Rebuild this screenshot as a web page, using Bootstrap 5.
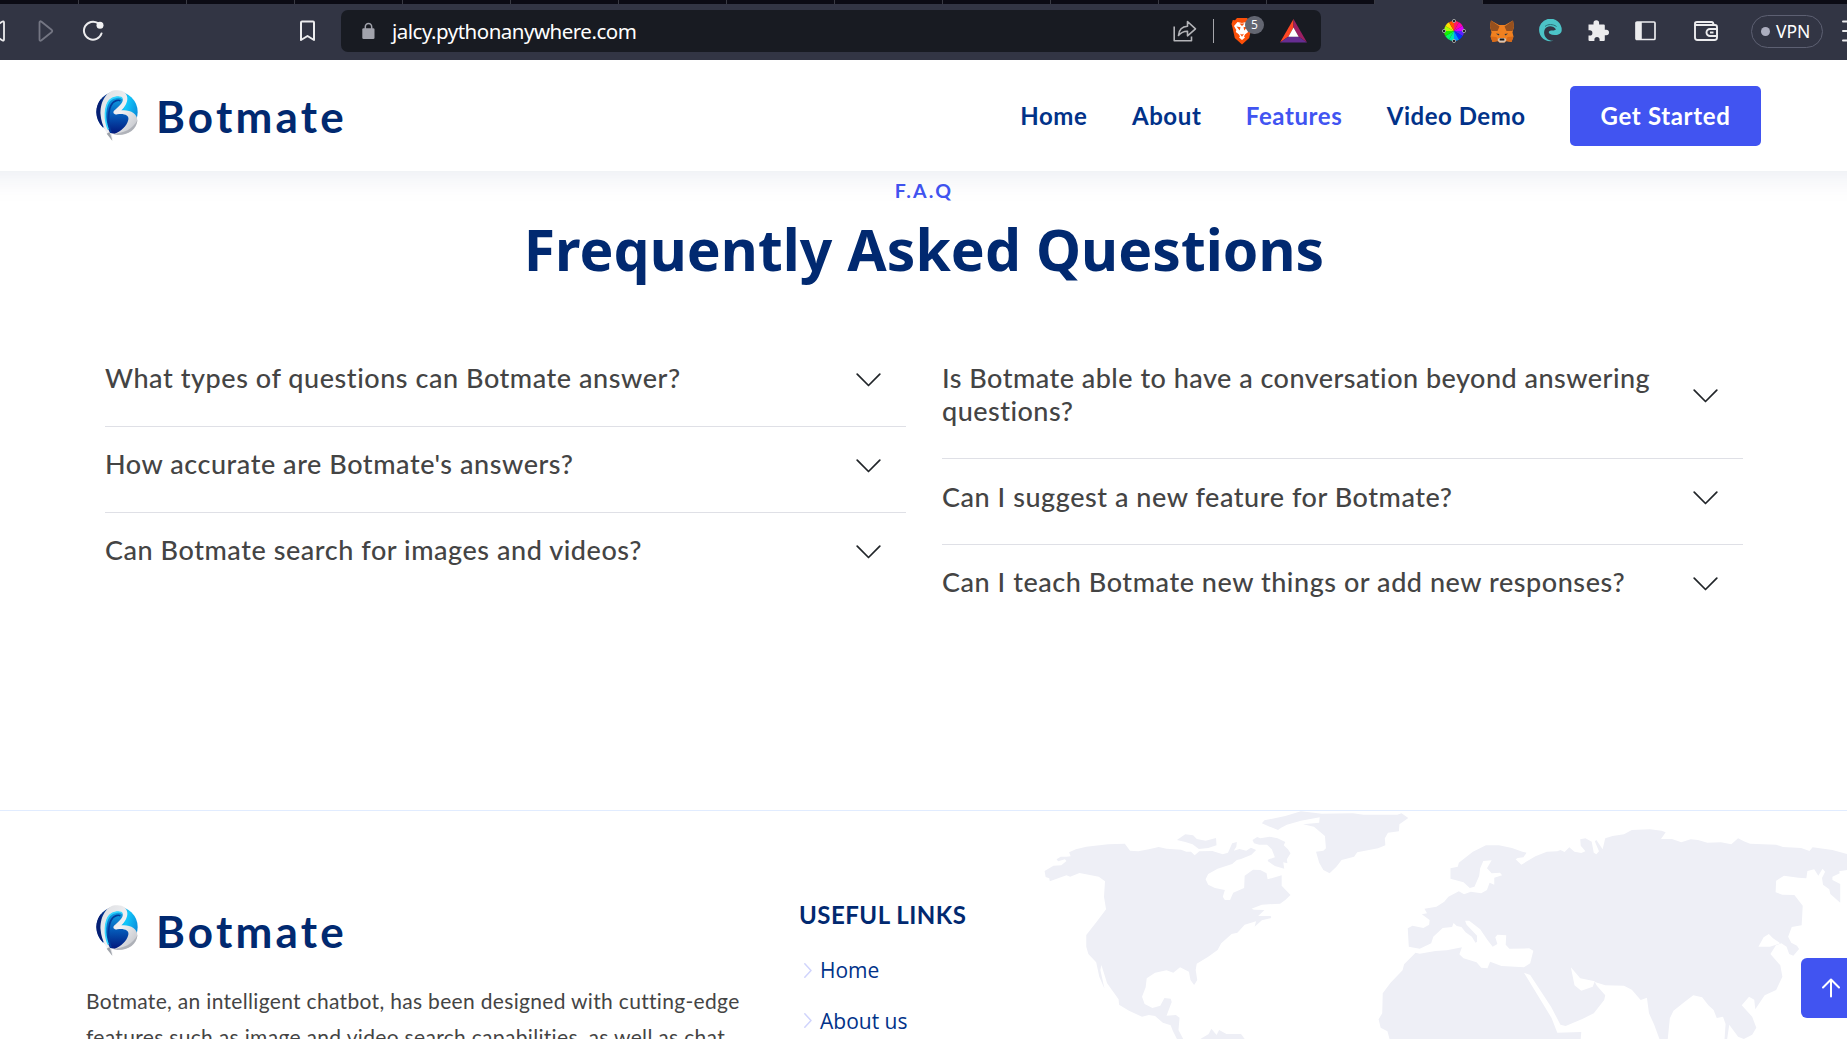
<!DOCTYPE html>
<html lang="en">
<head>
<meta charset="utf-8">
<meta name="viewport" content="width=device-width, initial-scale=1">
<title>Botmate</title>
<link rel="stylesheet" href="https://cdn.jsdelivr.net/npm/bootstrap@5.3.0/dist/css/bootstrap.min.css">
<script src="https://cdn.jsdelivr.net/npm/bootstrap@5.3.0/dist/js/bootstrap.bundle.min.js"></script>
<style>
  :root { --navy:#012970; --ink:#013289; --brand:#4154f1; }
  body { font-family:"Open Sans","Noto Sans",sans-serif; color:#444; background:#fff; }
  .screen { width:1847px; height:1039px; }
  svg { display:block; flex:none; }
  .round-face { font-family:Lato,"Open Sans",sans-serif; }
  /* browser chrome */
  .tabstrip { height:4px; background:#0b0b14; }
  .tabstrip span { width:108px; border-right:1px solid #3a3b44; flex:none; }
  .tabstrip span:first-child { width:79px; }
  .tabstrip .current-tab { background:#323544; }
  .toolbar { height:56px; background:#323544; padding-bottom:2px; }
  .toolbar > *, .address > * { flex:none; }
  .address { width:980px; height:42px; margin-left:25px; background:#181b22; border-radius:7px; }
  .address .url { font-family:"Noto Sans",sans-serif; font-size:20.5px; letter-spacing:-.5px; margin-left:17px; width:782px; line-height:30px; color:#fff; }
  .split { width:1px; height:24px; margin-left:16px; background:#a5a6ab; }
  .count { left:14px; top:-1px; width:19px; height:18px; border-radius:9px; background:#636671; color:#fff; font-size:12px; line-height:18px; }
  .vpn { width:72px; height:33px; margin-left:33px; border:1.5px solid #5d6072; border-radius:17px; color:#fff; font-family:"Noto Sans",sans-serif; font-size:17.5px; }
  .vpn i { width:9px; height:9px; border-radius:50%; background:#acaebf; }
  /* site header: bleeds past both edges so that its shadow stays even */
  .site-head { height:111px; background:#fff; box-shadow:0 2px 30px rgba(1,41,112,.1); margin:0 -40px; padding:0 126px 0 135px; z-index:2; }
  .brand-name { font-size:44px; font-weight:700; line-height:52px; letter-spacing:3.2px; color:var(--navy); margin-left:17px; }
  .site-nav { gap:44.4px; }
  .site-nav a { font-size:24px; font-weight:700; line-height:30px; color:var(--ink); text-decoration:none; }
  .site-nav a.active { color:var(--brand); }
  .site-nav a.start { background:var(--brand); color:#fff; width:191px; height:60px; line-height:59px; border-radius:5px; letter-spacing:.65px; }
  /* faq */
  .faq { height:639px; padding:8px 104px 0 105px; }
  .faq .kicker { font-size:19.5px; font-weight:700; line-height:24px; letter-spacing:2.2px; color:var(--brand); }
  .faq h2 { font-family:"Noto Sans",sans-serif; font-size:57px; font-weight:700; line-height:64px; letter-spacing:.06px; color:var(--navy); margin:14px 0 61px; }
  .faq-cols { gap:36px; }
  .faq-item { padding:21.3px 25.500px 31.1px 0; border-bottom:1px solid #dfe0e6; font-size:27px; font-weight:500; line-height:32.4px; letter-spacing:.55px; }
  .faq-item:first-child { padding-top:20.3px; }
  .faq-item:last-child { border-bottom:0; }
  .faq-item svg { margin-top:3px; }
  /* footer */
  .site-foot { height:229px; border-top:1.5px solid #e1ecff; padding:94px 0 0 86px; }
  .about { width:713px; }
  .about p { width:680px; margin:25px 0 0; font-size:21px; line-height:36px; letter-spacing:.32px; }
  .useful h4 { font-size:24px; font-weight:700; line-height:28px; letter-spacing:.5px; color:var(--navy); margin:-4px 0 26px; }
  .useful a { font-size:21px; line-height:30px; color:var(--ink); text-decoration:none; margin-bottom:20.5px; }
  .world { left:1030px; top:-1px; }
  .to-top { left:1801px; top:147px; width:60px; height:60px; border-radius:6px; background:var(--brand); padding:20px 0 0 20px; }
</style>
</head>
<body>
<svg width="0" height="0" class="position-absolute" aria-hidden="true">
  <defs>
    <linearGradient id="disc" x1="0" y1=".2" x2="1" y2=".5"><stop offset="0" stop-color="#02186e"/><stop offset=".35" stop-color="#0553b0"/><stop offset=".7" stop-color="#12c8fb"/><stop offset="1" stop-color="#0a8fdc"/></linearGradient>
    <linearGradient id="inner" x1="0" y1="0" x2="0" y2="1"><stop offset="0" stop-color="#0fa4e4"/><stop offset=".45" stop-color="#0560be"/><stop offset="1" stop-color="#02187c"/></linearGradient>
    <linearGradient id="silver" x1="0" y1="0" x2="1" y2="1"><stop offset="0" stop-color="#dcdee1"/><stop offset=".5" stop-color="#f1f1f3"/><stop offset="1" stop-color="#b4b7be"/></linearGradient>
    <symbol id="logo" viewBox="46 27 132 162">
      <circle cx="112" cy="96" r="62" fill="url(#disc)"/>
      <path d="M64 57C44 82 46 119 70 143L66 100Z" fill="#051f74"/>
      <path d="M98 182C84 168 65 135 63 106 60 70 78 34 106 31 128 28 142 38 143 53 144 69 134 82 125 91 150 88 174 101 173 121 172 148 146 166 112 165 104 165 98 162 95 160 98 168 98 176 98 182Z" fill="url(#silver)"/>
      <path d="M92 159C73 128 73 79 88 62 98 50 124 46 129 57 132 68 114 83 103 92 98 99 104 104 114 103 134 100 149 107 146 119 141 139 124 153 105 161Z" fill="url(#inner)"/>
      <path d="M86 148C73 118 75 78 90 61 100 50 123 48 128 56" fill="none" stroke="#32d5ff" stroke-width="5"/>
      <path d="M94 158C84 132 84 86 98 70 104 62 116 59 122 62" fill="none" stroke="#033b9b" stroke-width="5"/>
      <path d="M174 119C170 148 146 166 113 165L98 161C130 160 159 149 174 119Z" fill="#9a9da5" opacity=".6"/>
      <path d="M90 156 98 182 81 161Z" fill="#9fa3aa"/>
    </symbol>
    <symbol id="down" viewBox="0 0 25 14"><path d="M1.200 1.200 12.500 12.500 23.800 1.200" fill="none" stroke="#212529" stroke-width="1.700" stroke-linecap="round" stroke-linejoin="round"/></symbol>
    <symbol id="next" viewBox="0 0 8 15"><path d="M.8.800 7 7.500.8 14.200" fill="none" stroke="#d0d4fc" stroke-width="1.500" stroke-linecap="round" stroke-linejoin="round"/></symbol>
  </defs>
</svg>
<div class="screen overflow-hidden position-relative">
  <div class="tabstrip d-flex overflow-hidden">
    <span></span><span></span><span></span><span></span><span></span><span></span><span></span><span></span><span></span><span></span><span></span><span></span><span></span><span class="current-tab"></span>
  </div>
  <div class="toolbar d-flex align-items-center overflow-hidden position-relative z-3">
    <svg width="6" height="22" viewBox="0 0 6 22" fill="none" stroke="#ececee" stroke-width="1.800"><path d="M-12 11 2.500 1.500Q4 1 4 2.500v17Q4 21 2.500 20.500Z"/></svg>
    <svg width="16" height="22" viewBox="0 0 16 22" fill="none" stroke="#747683" stroke-width="1.800" stroke-linejoin="round" style="margin-left:32px"><path d="M1.500 2.500C1.500 1 2.500 1 3.500 1.700L13.500 9.800Q15 11 13.500 12.200L3.500 20.300C2.500 21 1.500 21 1.500 19.500Z"/></svg>
    <svg width="23" height="22" viewBox="0 0 23 22" style="margin-left:28px"><path d="M16 3.200A9 9 0 1 0 19.500 13.500" fill="none" stroke="#ececee" stroke-width="2" stroke-linecap="round"/><circle cx="18" cy="5.200" r="3.500" fill="#f2f2f3"/></svg>
    <svg width="17" height="22" viewBox="0 0 17 22" fill="none" stroke="#ececee" stroke-width="2" stroke-linejoin="round" style="margin-left:194px"><path d="M2 2.500Q2 1.500 3 1.500h11q1 0 1 1V20l-6.500-4L2 20Z"/></svg>
    <div class="address d-flex align-items-center">
      <svg width="13" height="18" viewBox="0 0 13 18" style="margin-left:21px"><path d="M3.300 8V5a3.200 3.500 0 0 1 6.400 0v3" fill="none" stroke="#a1a3ac" stroke-width="1.500"/><rect x=".3" y="6.300" width="12.200" height="10.700" rx="1.300" fill="#a1a3ac"/></svg>
      <div class="url">jalcy.pythonanywhere.com</div>
      <svg width="24" height="22" viewBox="0 0 24 22" fill="none" stroke="#b3b4b8" stroke-width="1.600" stroke-linejoin="round" style="margin-left:-1px"><path d="M1.200 6.500V20.800H18.500V16.500"/><path d="M5.500 15.500C6 9.500 9.500 6.500 14.500 6.300V1.500L22.500 8.800 14.500 15.800V11.200C10.500 11 8 12.500 5.500 15.500Z"/></svg>
      <div class="split"></div>
      <div class="position-relative" style="margin-left:17px">
        <svg width="22" height="28" viewBox="0 0 22 28"><path d="M6 1h10l2 2.300 2.200-.2 1.300 4-1 3.400-2.300 10.500L11 27.500 3.800 21 1.500 10.500.5 7.100l1.300-4 2.200.2Z" fill="#fb4f08"/><path d="M6.500 5 11 6l4.500-1 3.500 4-2.300 4 .5 2-3.200 2.600-1 1.900 1 1L11 23l-3-2.500 1-1-1-1.900L4.800 15l.5-2L3 9Z" fill="#fff"/><path d="m5.500 9.500 4 .8-.8 3.200ZM16.500 9.500l-4 .8.800 3.200ZM9 16.700l2 .9 2-.9-2 3ZM8.500 6.500 11 9l2.500-2.500Z" fill="#fb4f08"/></svg>
        <div class="count position-absolute text-center">5</div>
      </div>
      <svg width="27" height="24" viewBox="0 0 27 24" style="margin-left:27px"><path d="M13.500 0 0 23.500 8.500 17.500 13.500 8.500Z" fill="#ff4724"/><path d="M13.500 0 27 23.500 18.500 17.500 13.500 8.500Z" fill="#9e1f63"/><path d="M0 23.500h27l-8.500-6h-10Z" fill="#662d91"/><path d="m13.500 8.500 5.200 9.200H8.300Z" fill="#fff"/></svg>
    </div>
    <svg width="24" height="24" viewBox="0 0 24 24" style="margin-left:121px"><g><path d="M12 12V2A10 10 0 0 1 17 3.340Z" fill="#ff1a60"/><path d="M12 12 17 3.340A10 10 0 0 1 20.660 7Z" fill="#ff00b0"/><path d="M12 12 20.660 7A10 10 0 0 1 22 12Z" fill="#d800ff"/><path d="M12 12h10a10 10 0 0 1-1.340 5Z" fill="#5a20ff"/><path d="m12 12 8.660 5A10 10 0 0 1 17 20.660Z" fill="#0030ff"/><path d="m12 12 5 8.660A10 10 0 0 1 12 22Z" fill="#0090ff"/><path d="M12 12v10a10 10 0 0 1-5-1.340Z" fill="#00e8a8"/><path d="m12 12-5 8.660A10 10 0 0 1 3.340 17Z" fill="#00ff60"/><path d="m12 12-8.660 5A10 10 0 0 1 2 12Z" fill="#18f000"/><path d="M12 12H2a10 10 0 0 1 1.340-5Z" fill="#a8ff00"/><path d="M12 12 3.340 7A10 10 0 0 1 7 3.340Z" fill="#ffe000"/><path d="M12 12 7 3.340A10 10 0 0 1 12 2Z" fill="#ff5000"/></g><g fill="#15151a" stroke="#bbb" stroke-width=".8"><circle cx="12" cy="2" r="1.600"/><circle cx="22" cy="12" r="1.600"/><circle cx="12" cy="22" r="1.600"/><circle cx="2" cy="12" r="1.600"/></g></svg>
    <svg width="24" height="23" viewBox="0 0 24 23" style="margin-left:24px"><path d="M1 .5 9 5h6l8-4.500 1 6-1.500 6 1 4-2 5.500-5-1-2 1.500h-5l-2-1.500-5 1-2-5.500 1-4L0 6.500Z" fill="#f08020"/><path d="M1 .5 9.500 6.500 7.500 11H1.500L0 6.500ZM23 .5 14.500 6.500l2 4.500h6L24 6.500Z" fill="#96501e"/><path d="m.5 16.500 6 .5 2 4-6 1ZM23.500 16.500l-6 .5-2 4 6 1Z" fill="#d86a18"/><path d="m6 13.500 3.500.5-1 1.500ZM18 13.500l-3.500.5 1 1.500Z" fill="#2c3a48"/><path d="M9 18h6l1.500 2-2 2.500h-5L7.500 20Z" fill="#d8c4b4"/><path d="M9.700 18.500h4.600v2H9.700Z" fill="#16181c"/></svg>
    <svg width="24" height="24" viewBox="0 0 24 24" style="margin-left:24px"><path d="M16.500 21.500A11.300 11.300 0 1 1 23.700 11C23.900 14.500 20.500 16.300 16.500 16 12 15.800 10 14 11 12.500 12.500 10.500 15 12.500 18 10.500 15.500 6.500 9.500 6 7 10 4.500 14.500 7.500 20.500 12.500 21.500Q14.500 22 16.500 21.500Z" fill="#4cc3c7"/><path d="M7 7.500C10 4.800 15 5 18.500 7.500" stroke="#2c6f78" stroke-width="1" fill="none"/></svg>
    <svg width="22" height="22" viewBox="0 0 22 22" style="margin-left:25px"><path d="M1.500 4.500h5V3a2.800 2.800 0 0 1 5.600 0v1.500h4.700q1 0 1 1v4.200h1.400a2.800 2.800 0 0 1 0 5.600h-1.400V20q0 1-1 1h-4.200v-1.300a2.600 2.600 0 0 0-5.200 0V21H2.500q-1 0-1-1v-4.500h1.300a2.600 2.600 0 0 0 0-5.200H1.500Z" fill="#ececee"/></svg>
    <svg width="21" height="20" viewBox="0 0 21 20" style="margin-left:26px"><rect x="1" y="1" width="19" height="17.500" rx="1" fill="none" stroke="#ececee" stroke-width="1.700"/><path d="M1 1h5.800v17.500H1Z" fill="#ececee"/></svg>
    <svg width="24" height="20" viewBox="0 0 24 20" fill="none" stroke="#ececee" stroke-width="1.900" stroke-linejoin="round" style="margin-left:38px"><path d="M1 3V16.500Q1 19 3.500 19H20.500Q23 19 23 16.500V6Q23 4 21 4H3Q1 4 1 2.500 1 1 3 1H17.500Q19.500 1 19.500 4"/><path d="M23 8H16a3.500 3.500 0 0 0 0 7h7Z"/><path d="M16 11.500h3.500"/></svg>
    <div class="vpn d-flex align-items-center"><i style="margin:0 6px 0 9px"></i>VPN</div>
    <svg width="18" height="22" viewBox="0 0 18 22" stroke="#ececee" stroke-width="2" stroke-linecap="round" style="margin-left:19px"><path d="M1 1.500h18M1 11h18M1 20.500h18"/></svg>
  </div>

  <header class="site-head round-face d-flex align-items-center justify-content-between position-relative">
    <div class="d-flex align-items-center">
      <svg width="44" height="54"><use href="#logo"/></svg>
      <div class="brand-name">Botmate</div>
    </div>
    <nav class="site-nav d-flex align-items-center">
      <a href="#" style="letter-spacing:.6px">Home</a>
      <a href="#" style="letter-spacing:.6px">About</a>
      <a href="#" class="active" style="letter-spacing:.6px">Features</a>
      <a href="#" style="letter-spacing:.52px">Video Demo</a>
      <a href="#" class="start text-center">Get Started</a>
    </nav>
  </header>

  <section class="faq">
    <div class="kicker round-face text-center">F.A.Q</div>
    <h2 class="text-center">Frequently Asked Questions</h2>
    <div class="faq-cols round-face d-flex align-items-start">
      <div class="flex-fill w-50">
        <div class="faq-item d-flex align-items-center justify-content-between"><span>What types of questions can Botmate answer?</span><svg width="25" height="14"><use href="#down"/></svg></div>
        <div class="faq-item d-flex align-items-center justify-content-between"><span>How accurate are Botmate's answers?</span><svg width="25" height="14"><use href="#down"/></svg></div>
        <div class="faq-item d-flex align-items-center justify-content-between"><span>Can Botmate search for images and videos?</span><svg width="25" height="14"><use href="#down"/></svg></div>
      </div>
      <div class="flex-fill w-50">
        <div class="faq-item d-flex align-items-center justify-content-between"><span style="letter-spacing:.48px">Is Botmate able to have a conversation beyond answering<br>questions?</span><svg width="25" height="14"><use href="#down"/></svg></div>
        <div class="faq-item d-flex align-items-center justify-content-between"><span>Can I suggest a new feature for Botmate?</span><svg width="25" height="14"><use href="#down"/></svg></div>
        <div class="faq-item d-flex align-items-center justify-content-between"><span>Can I teach Botmate new things or add new responses?</span><svg width="25" height="14"><use href="#down"/></svg></div>
      </div>
    </div>
  </section>

  <footer class="site-foot d-flex position-relative overflow-hidden">
    <svg class="world position-absolute" width="817" height="229" viewBox="0 30 1568 687" preserveAspectRatio="none" fill="#eeeff6">
      <path d="M28 213 45 197 60 196 70 183 67 178 54 184 51 178 59 170 70 170 78 169 75 157 88 148 108 140 150 133 182 131 192 152 208 154 228 148 247 141 262 146 290 149 300 155 309 155 316 166 325 154 350 153 370 163 380 158 388 130 397 126 396 140 391 152 402 147 415 152 424 143 434 150 425 164 405 177 397 180 388 192 360 206 342 222 337 238 342 254 355 264 374 270 370 290 374 300 384 300 390 278 411 264 412 227 428 209 442 210 454 220 456 238 483 226 483 257 500 285 490 300 480 311 445 314 425 326 430 329 450 330 438 348 462 348 463 354 445 361 431 380 434 364 412 374 398 398 387 402 367 430 360 450 342 470 320 491 318 510 321 540 315 555 308 540 305 515 288 502 275 518 262 511 240 518 224 535 222 562 215 590 220 612 235 624 250 617 258 594 270 596 272 606 262 647 280 645 287 653 285 690 294 717 282 717 274 692 270 676 255 668 240 648 228 645 215 650 190 632 171 614 170 598 148 550 137 495 135 510 143 566 133 530 127 487 112 462 108 440 108 405 128 365 146 328 142 290 144 244 132 230 115 225 95 219 77 230 70 226 38 244 37 235 30 231Z"/>
      <path d="M282 120 298 103 313 106 320 117 337 122 357 114 358 136 342 144 324 147 312 133 298 126Z"/>
      <path d="M427 120 436 111 442 115 460 110 475 115 490 126 487 136 495 148 500 160 493 178 494 190 486 187 488 206 470 198 456 183 458 178 470 172 464 148 455 134 440 134 430 130Z"/>
      <path d="M445 70 450 61 490 48 520 34 560 41 620 40 640 44 705 44 713 40 726 54 709 73 708 94 687 98 681 115 682 136 668 145 628 157 622 170 598 180 588 200 575 220 563 210 555 188 549 155 563 152 568 145 566 108 545 80 524 73 555 68 556 52 520 62 493 74 482 83 476 90 460 80Z"/>
      <path d="M807 205 821 200 823 188 850 155 875 136 900 136 925 144 945 155 953 158 947 172 936 174 932 178 943 194 970 169 992 155 1012 154 1018 150 1026 156 1035 142 1045 155 1058 159 1066 154 1057 137 1056 118 1066 115 1078 125 1082 158 1087 163 1092 154 1084 124 1087 120 1099 148 1104 115 1118 108 1140 103 1155 90 1190 88 1212 92 1220 97 1211 117 1232 117 1250 127 1268 118 1282 120 1300 128 1326 127 1346 133 1359 115 1370 124 1382 131 1432 134 1445 141 1480 144 1496 153 1502 142 1540 150 1568 162V210L1553 214 1554 220 1540 230 1540 240 1555 252 1555 308 1536 282 1534 268 1522 254 1520 234 1526 215 1521 206 1513 227 1505 208 1492 213 1490 235 1475 233 1447 227 1432 242 1431 277 1444 284 1467 285 1483 317 1481 376 1462 381 1455 410 1461 428 1472 437 1476 447 1465 467 1457 462 1452 440 1442 430 1423 441 1398 440 1408 412 1418 402 1426 406 1424 425 1438 420 1428 445 1421 462 1440 496 1444 530 1432 570 1410 586 1392 628 1390 599 1380 590 1366 616 1386 650 1394 683 1386 704 1370 717 1359 710 1342 674 1338 717 1333 717 1335 672 1330 650 1318 654 1312 630 1302 616 1290 592 1273 586 1256 606 1235 632 1228 655 1224 717 1208 717 1198 674 1188 640 1184 593 1172 600 1155 569 1140 557 1104 556 1084 546 1088 557 1104 586 1102 600 1082 640 1060 657 1028 678 1018 674 1000 620 960 525 948 518 1001 654 1012 698 1058 696 1057 717H690L686 694 673 683 669 658 676 640 677 580 692 548 715 511 718 493 740 458 748 461 778 453 800 451 829 442 824 463 832 475 857 487 866 503 878 505 883 485 905 498 948 502 960 490 966 452 958 445 920 446 913 434 914 406 897 404 893 412 897 432 888 440 878 420 864 388 843 362 835 362 838 374 858 407 858 425 846 438 855 428 848 410 836 397 828 381 819 378 813 369 810 381 792 384 774 410 770 430 748 446 727 440 725 385 734 377 755 384 766 374 767 360 752 343 762 340 757 326 780 320 795 305 803 290 823 274 833 283 846 275 866 280 877 270 882 248 891 254 891 233 906 226 902 218 886 220 877 205 886 181 870 183 864 205 862 228 853 260 844 264 832 247 807 236Z"/>
      <path d="m1038 502 18 33 28 9-4 16-22 12-13-16Z" fill="#fff"/>
      <path d="M1398 440 1408 412 1418 402 1426 415 1440 430 1420 440Z" fill="#fff"/>
      <path d="M327 717 343 702 348 686 358 705 363 690 377 702 405 702 412 717Z"/>
    </svg>
    <div class="about">
      <div class="d-flex align-items-center round-face" style="margin:-1px 0 0 9px">
        <svg width="44" height="54"><use href="#logo"/></svg>
        <div class="brand-name">Botmate</div>
      </div>
      <p class="round-face">Botmate, an intelligent chatbot, has been designed with cutting-edge features such as image and video search capabilities, as well as chat</p>
    </div>
    <div class="useful">
      <h4 class="round-face">USEFUL LINKS</h4>
      <a href="#" class="d-flex align-items-center"><svg width="8" height="15" style="margin:0 8px 0 5px"><use href="#next"/></svg>Home</a>
      <a href="#" class="d-flex align-items-center"><svg width="8" height="15" style="margin:0 8px 0 5px"><use href="#next"/></svg>About us</a>
    </div>
    <a href="#" class="to-top position-absolute" aria-label="Back to top"><svg width="20" height="20" viewBox="0 0 20 20" fill="none" stroke="#fff" stroke-width="2" stroke-linecap="round" stroke-linejoin="round"><path d="M10 18.500V1.500M2 9.500l8-8 8 8"/></svg></a>
  </footer>
</div>
</body>
</html>
